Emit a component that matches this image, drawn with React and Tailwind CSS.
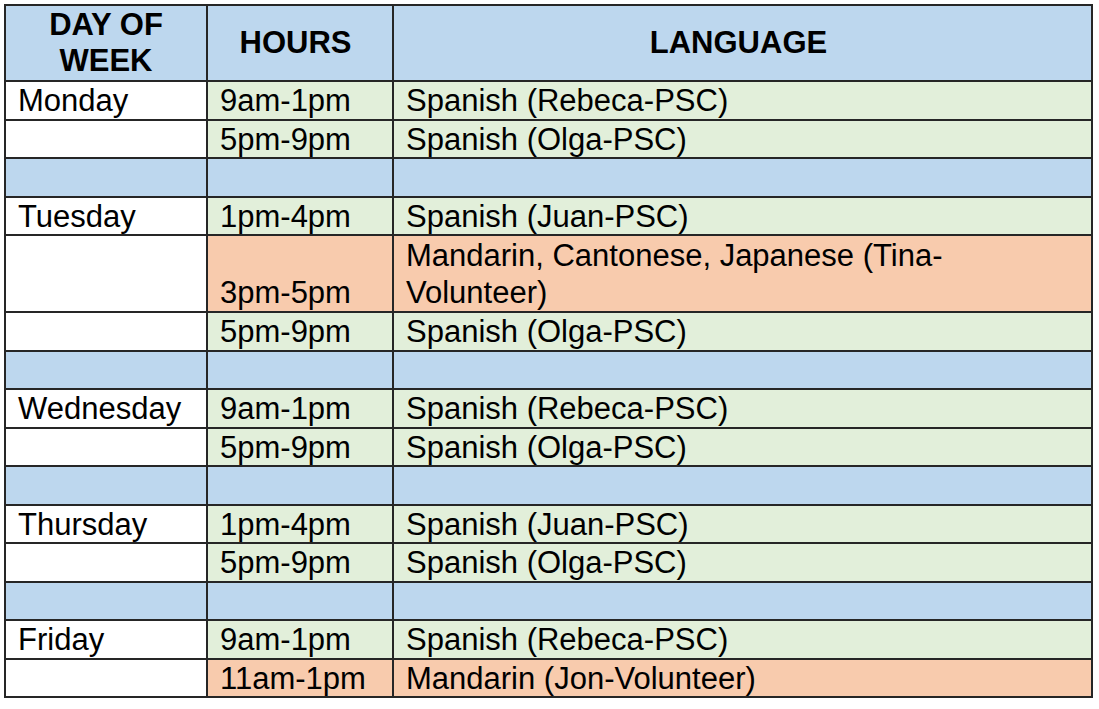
import React from "react";

const rows = [
  { day: "Monday", hours: "9am-1pm", lang: "Spanish (Rebeca-PSC)", tone: "green" },
  { day: "", hours: "5pm-9pm", lang: "Spanish (Olga-PSC)", tone: "green" },
  { spacer: true },
  { day: "Tuesday", hours: "1pm-4pm", lang: "Spanish (Juan-PSC)", tone: "green" },
  {
    day: "",
    hours: "3pm-5pm",
    lang: ["Mandarin, Cantonese, Japanese (Tina-", "Volunteer)"],
    tone: "orange",
    tall: true,
  },
  { day: "", hours: "5pm-9pm", lang: "Spanish (Olga-PSC)", tone: "green" },
  { spacer: true },
  { day: "Wednesday", hours: "9am-1pm", lang: "Spanish (Rebeca-PSC)", tone: "green" },
  { day: "", hours: "5pm-9pm", lang: "Spanish (Olga-PSC)", tone: "green" },
  { spacer: true },
  { day: "Thursday", hours: "1pm-4pm", lang: "Spanish (Juan-PSC)", tone: "green" },
  { day: "", hours: "5pm-9pm", lang: "Spanish (Olga-PSC)", tone: "green" },
  { spacer: true },
  { day: "Friday", hours: "9am-1pm", lang: "Spanish (Rebeca-PSC)", tone: "green" },
  { day: "", hours: "11am-1pm", lang: "Mandarin (Jon-Volunteer)", tone: "orange" },
];

const cell = "border-2 border-[#262626] p-0 pl-[12px] pt-[1px] align-top";
const head = "border-2 border-[#262626] p-0 text-center align-middle text-[31px] leading-[36px] font-bold";

export default function App() {
  return (
    <div
      className="min-h-screen bg-white pl-[4px] pt-[4px] text-black"
      style={{ fontFamily: '"Liberation Sans", Arial, sans-serif' }}
    >
      <table className="table-fixed border-collapse w-[1089px] text-[31px] leading-[35px]">
        <colgroup>
          <col className="w-[202px]" />
          <col className="w-[186px]" />
          <col />
        </colgroup>
        <thead>
          <tr className="h-[76px] bg-[#bdd7ee]">
            <th className={head}>
              DAY OF
              <br />
              WEEK
            </th>
            <th className={`${head} pr-[9px]`}>HOURS</th>
            <th className={`${head} pr-[8px]`}>LANGUAGE</th>
          </tr>
        </thead>
        <tbody>
          {rows.map((r, i) => {
            if (r.spacer) {
              return (
                <tr key={i} className="h-[38.5px] bg-[#bdd7ee]">
                  <td className={cell}></td>
                  <td className={cell}></td>
                  <td className={cell}></td>
                </tr>
              );
            }
            const tint = r.tone === "orange" ? "bg-[#f8cbad]" : "bg-[#e2efda]";
            return (
              <tr key={i} className={r.tall ? "h-[77px]" : "h-[38.5px]"}>
                <td className={`${cell} bg-white`}>{r.day}</td>
                <td className={`${cell} ${tint} ${r.tall ? "!align-bottom !pt-0 pb-[1px]" : ""}`}>
                  {r.hours}
                </td>
                <td className={`${cell} ${tint} ${r.tall ? "leading-[37px]" : ""}`}>
                  {Array.isArray(r.lang) ? (
                    <>
                      {r.lang[0]}
                      <br />
                      {r.lang[1]}
                    </>
                  ) : (
                    r.lang
                  )}
                </td>
              </tr>
            );
          })}
        </tbody>
      </table>
    </div>
  );
}
